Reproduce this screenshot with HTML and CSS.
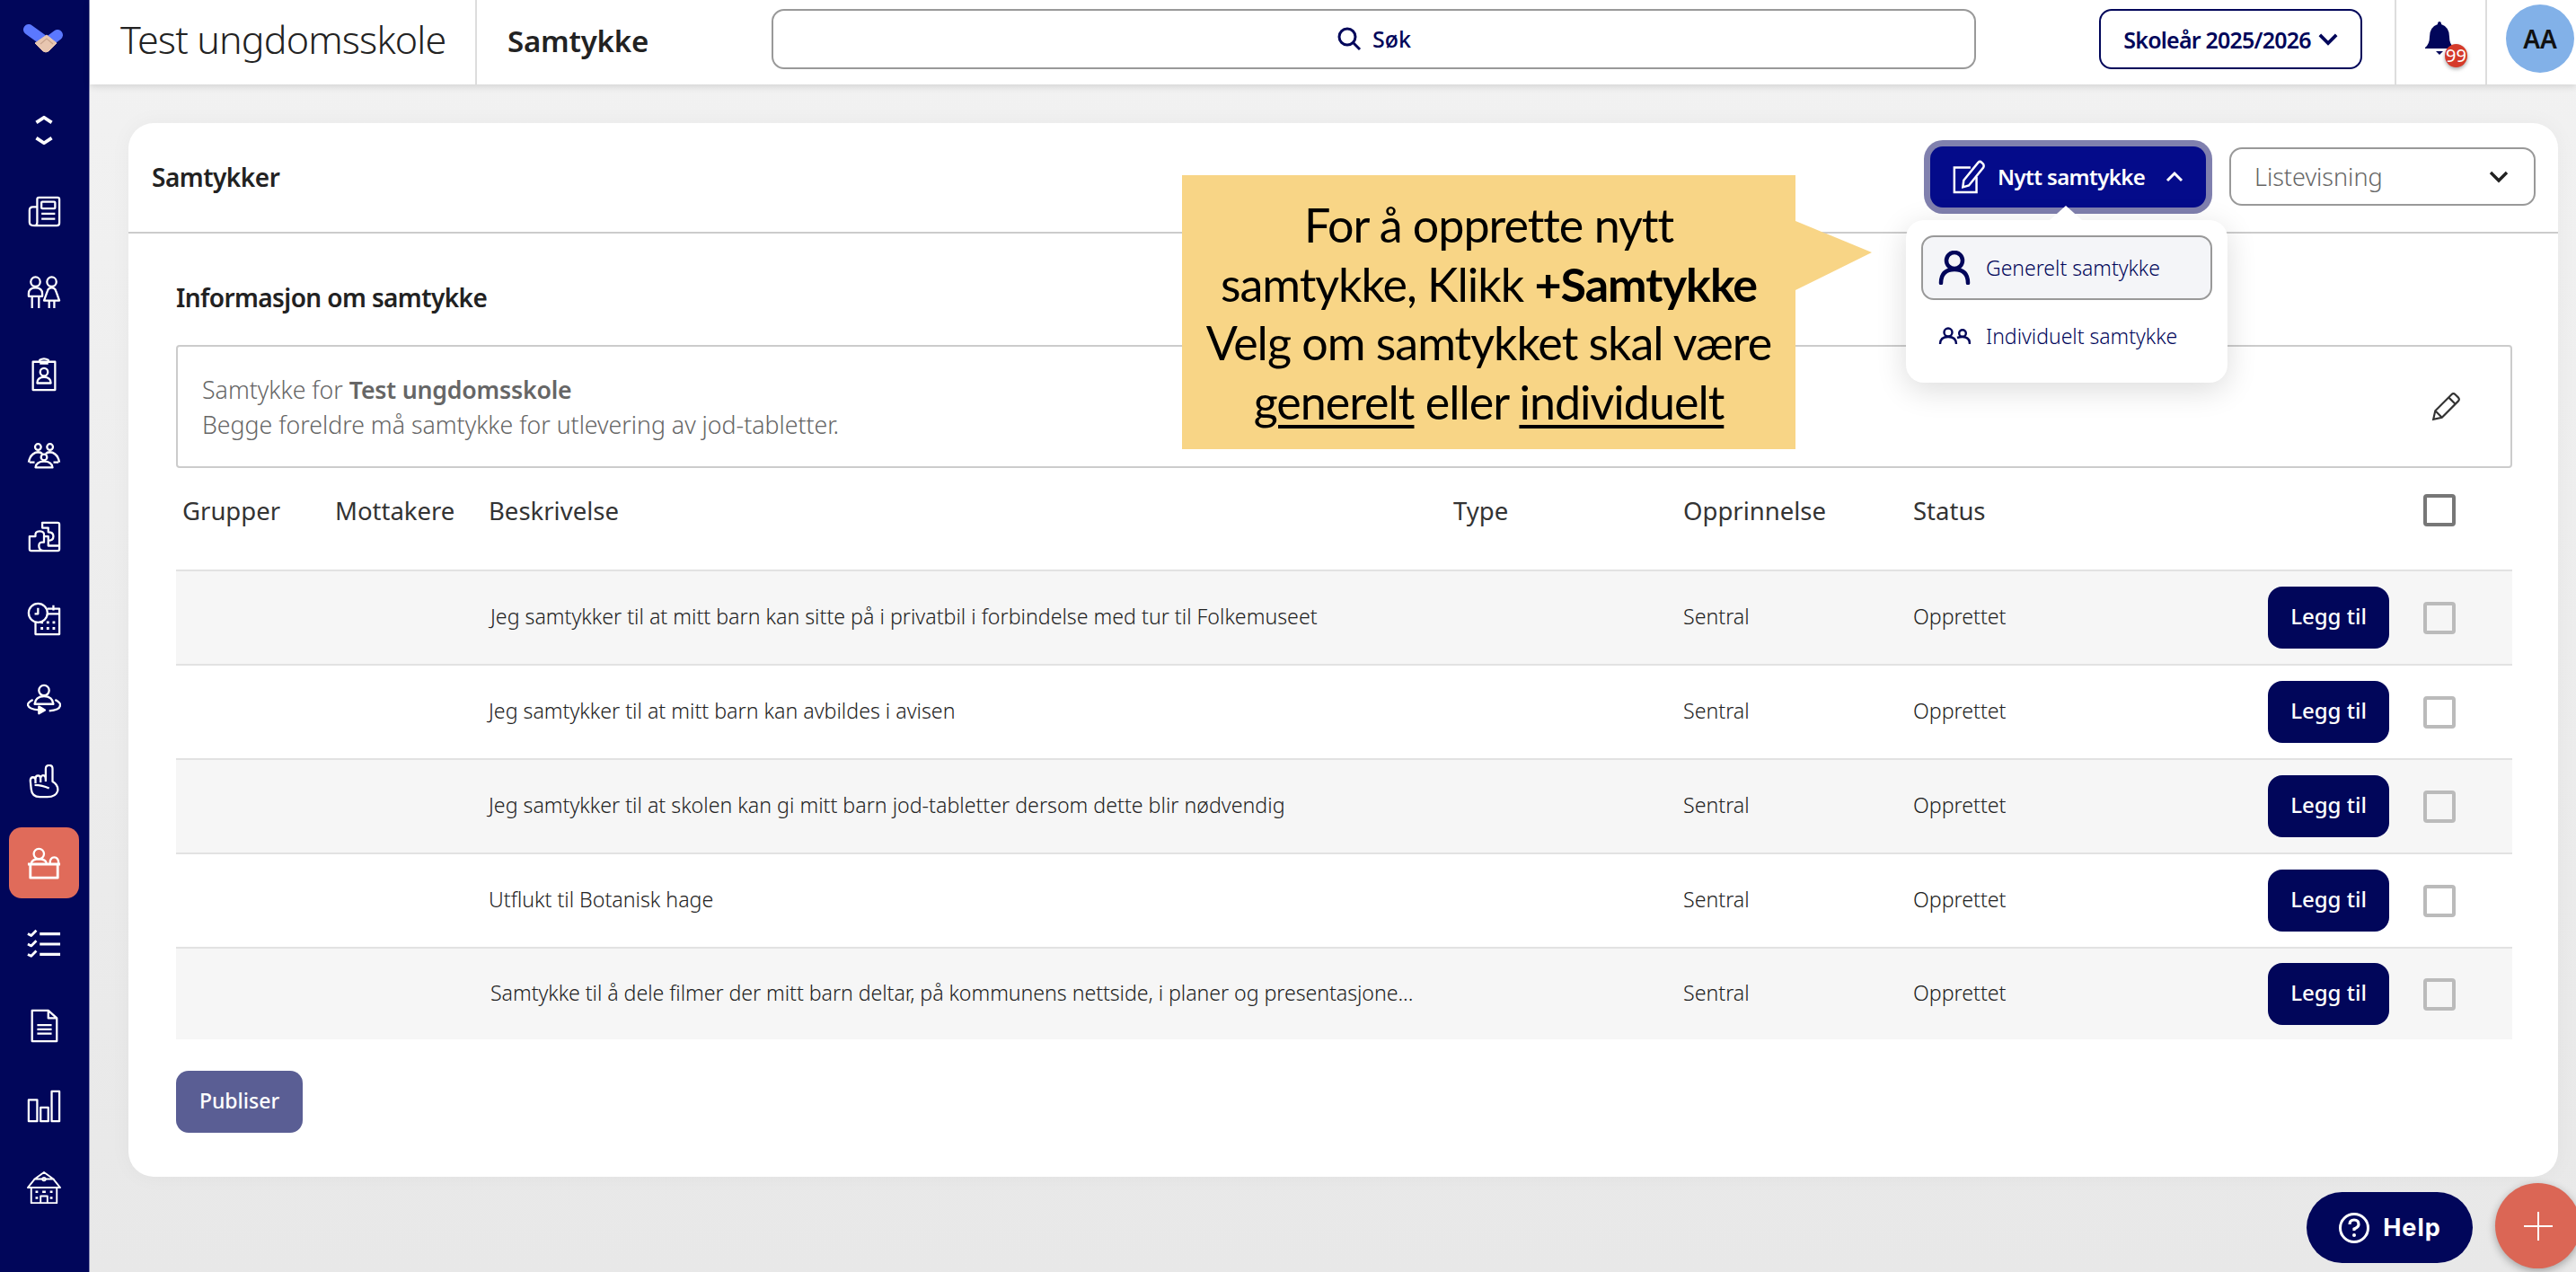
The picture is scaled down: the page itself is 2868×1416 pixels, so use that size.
FILE: index.html
```html
<!DOCTYPE html>
<html lang="nb">
<head>
  <meta charset="UTF-8">
  <meta name="viewport" content="width=device-width">
  <title>Samtykke</title>
  <link rel="stylesheet" href="styles.css">
</head>
<body>
  <div class="app">
    <nav class="sidebar">
      <div class="logo">
        <svg width="46" height="34" viewBox="0 0 46 34">
          <path d="M6 6 L24 19" stroke="#5b78ff" stroke-width="12" stroke-linecap="round" fill="none"/>
          <path d="M38 12 L30 18" stroke="#5b78ff" stroke-width="12" stroke-linecap="round" fill="none"/>
          <path d="M13 21 L26 12 L37 21 L28 30 Q25 32 22 30 Z" fill="#e8c6b0" stroke="#e8c6b0" stroke-width="1" stroke-linejoin="round"/>
          <path d="M19 22 L26 16 L33 22" stroke="#c9a48e" stroke-width="1.2" fill="none"/>
        </svg>
      </div>
      <a class="nav-item">
        <svg class="nav-icon" viewBox="0 0 40 40"><path d="M11 11 L20 5 L29 11 M11 29 L20 35 L29 29" stroke-width="4"/></svg>
      </a>
      <a class="nav-item">
        <svg class="nav-icon" viewBox="0 0 40 40"><path d="M9 36 H35 Q38 36 38 33 V5 Q38 3 36 3 H14 Q12 3 12 5 V32 Q12 36 9 36 Q3 36 3 32 V18 Q3 14 7 14 H12"/><rect x="17" y="8" width="16" height="8" rx="1"/><path d="M17 22 H33 M17 28 H33"/></svg>
      </a>
      <a class="nav-item">
        <svg class="nav-icon" viewBox="0 0 40 40"><circle cx="10" cy="7" r="5.5"/><path d="M2 21 Q2 14 10 14 Q18 14 18 21 V24 H2 Z M6 24 V38 M14 24 V38"/><circle cx="29" cy="7" r="5.5"/><path d="M29 14 Q25 14 24 18 L20 29 H38 L34 18 Q33 14 29 14 Z M26 29 V38 M32 29 V38"/></svg>
      </a>
      <a class="nav-item">
        <svg class="nav-icon" viewBox="0 0 40 40"><rect x="7" y="5" width="26" height="33"/><path d="M15 5 V3 Q20 0 25 3 V5 M15 7 H25"/><circle cx="20" cy="17" r="4.5"/><path d="M12 30 Q12 23 20 23 Q28 23 28 30 H12 Z"/></svg>
      </a>
      <a class="nav-item">
        <svg class="nav-icon" viewBox="0 0 40 40"><circle cx="13" cy="9" r="3.5"/><circle cx="27" cy="9" r="3.5"/><circle cx="20" cy="21" r="3.5"/><path d="M2 27 Q4 16 13 15 Q16 15 18 17 M38 27 Q36 16 27 15 Q24 15 22 17 M3 27 H9 M31 27 H37 M10 33 Q11 26 20 26 Q29 26 30 33 Z"/></svg>
      </a>
      <a class="nav-item">
        <svg class="nav-icon" viewBox="0 0 40 40"><path d="M18 3 H36 Q38 3 38 5 V34 Q38 36 36 36 H5 Q3 36 3 34 V19 H10 Q9 13 15 13 Q21 13 20 19 H25 V24 Q31 24 31 19 Q31 14 25 14 V9 H18 Z M20 19 V26 Q14 25 14 30 Q14 36 20 36 M25 24 V30 H38"/></svg>
      </a>
      <a class="nav-item">
        <svg class="nav-icon" viewBox="0 0 40 40"><circle cx="13" cy="13" r="11"/><path d="M13 7 V14 H9"/><path d="M24 8 H38 V38 H10 V24"/><path d="M24 14 H38 M31 4 V10" /><path d="M16 24 H19 M23 24 H26 M30 24 H33 M16 31 H19 M23 31 H26 M30 31 H33" stroke-width="3"/></svg>
      </a>
      <a class="nav-item">
        <svg class="nav-icon" viewBox="0 0 40 40"><circle cx="20" cy="9" r="6"/><path d="M9 25 Q10 16 20 16 Q30 16 31 25 Z"/><path d="M7 20 Q1 23 1 26 Q2 31 14 32 M26 33 Q39 32 39 26 Q39 23 33 20"/><path d="M14 28 L21 32 L14 36 Z" fill="#fff"/></svg>
      </a>
      <a class="nav-item">
        <svg class="nav-icon" viewBox="0 0 40 40"><path d="M22 20 V5 Q22 1 26 1 Q30 1 30 5 V20 Q37 24 36 31 Q34 38 24 38 H15 Q6 38 5 29 L4 19 Q4 15 7 15 Q10 15 10 18 V22 M10 17 Q10 13 13 13 Q16 13 16 17 V21 M16 16 Q17 12 20 13 Q22 14 22 18 M9 24 Q18 24 26 28"/></svg>
      </a>
      <a class="nav-item nav-item-active">
        <svg class="nav-icon" viewBox="0 0 40 40"><circle cx="14" cy="9" r="6"/><path d="M5 20 Q6 15 14 15 Q22 15 23 20 M27 20 Q27 13 32 13 Q37 13 37 20"/><path d="M1 21 H39 M4 21 V37 H36 V21" stroke-width="3"/></svg>
      </a>
      <a class="nav-item">
        <svg class="nav-icon" viewBox="0 0 40 40"><path d="M15 8 H39 M15 20 H39 M15 32 H39" stroke-width="3.4"/><path d="M1 8 L5 10 L11 4 M1 20 L5 22 L11 16 M1 32 L5 34 L11 28" stroke-width="3"/></svg>
      </a>
      <a class="nav-item">
        <svg class="nav-icon" viewBox="0 0 40 40"><path d="M6 2 H25 L35 11 V38 H6 Z M25 2 V11 H35"/><path d="M12 19 H29 M12 24 H29 M12 29 H29"/></svg>
      </a>
      <a class="nav-item">
        <svg class="nav-icon" viewBox="0 0 40 40"><rect x="2" y="12" width="10" height="25"/><rect x="16" y="21" width="9" height="16"/><rect x="29" y="2" width="9" height="35"/></svg>
      </a>
      <a class="nav-item">
        <svg class="nav-icon" viewBox="0 0 40 40"><path d="M20 1 L31 9 H9 Z" stroke-width="2"/><circle cx="20" cy="9" r="2" stroke-width="1.6"/><path d="M9 9 L1 19 H39 L31 9 M5 19 V37 H35 V19 M16 37 V29 H24 V37" stroke-width="2"/><path d="M10 24 H13 M27 24 H30 M10 31 H13 M27 31 H30 M18 24 H22" stroke-width="2.6"/></svg>
      </a>
    </nav>

    <div class="main">
      <header class="topbar">
        <div class="school-name">Test ungdomsskole</div>
        <div class="page-name">Samtykke</div>
        <div class="search">
          <svg class="search-icon" viewBox="0 0 28 28"><circle cx="12" cy="12" r="9"/><path d="M19 19 L26 26"/></svg>
          <span>Søk</span>
        </div>
        <button class="year-btn">Skoleår 2025/2026
          <svg class="year-chevron" viewBox="0 0 24 16"><path d="M2 3 L12 13 L22 3"/></svg>
        </button>
        <div class="bell-wrap">
          <svg class="bell" viewBox="0 0 32 38"><path d="M16 0 Q18 0 18 3 Q27 6 27 17 Q27 25 32 29 V30 H0 V29 Q5 25 5 17 Q5 6 14 3 Q14 0 16 0 Z M12 33 H20 L16 37 Z"/></svg>
          <span class="bell-count">99</span>
        </div>
        <div class="avatar-wrap"><div class="avatar">AA</div></div>
      </header>

      <section class="content">
        <div class="card">
          <div class="card-head">
            <h2 class="card-title">Samtykker</h2>
            <div class="card-actions">
              <div class="new-wrap">
                <button class="new-btn">
                  <svg class="new-icon" viewBox="0 0 40 40"><path d="M22 9 H3 V38 H29 V20" stroke-width="2.6"/><path d="M14 24 L31 3 Q33 1 35 3 L37 5 Q38 7 37 9 L20 30 L13 32 Z" stroke-width="2.6"/></svg>
                  <span>Nytt samtykke</span>
                  <svg class="new-chevron" viewBox="0 0 20 14"><path d="M2 11 L10 3 L18 11"/></svg>
                </button>
                <div class="menu">
                  <div class="menu-item menu-item-active">
                    <svg class="menu-icon" viewBox="0 0 36 38"><circle cx="18" cy="11" r="9" stroke-width="4.5"/><path d="M3 36 Q3 21 18 21 Q33 21 33 36" stroke-width="4.5" stroke-linecap="round"/></svg>
                    <span>Generelt samtykke</span>
                  </div>
                  <div class="menu-item">
                    <svg class="menu-icon menu-icon-small" viewBox="0 0 36 20"><circle cx="11" cy="6" r="4.5"/><path d="M2 19 Q2 11 11 11 Q20 11 20 19"/><circle cx="27" cy="7" r="3.8"/><path d="M21 12 Q24 11 27 11 Q35 11 35 19"/></svg>
                    <span>Individuelt samtykke</span>
                  </div>
                </div>
              </div>
              <div class="view-select">
                <span>Listevisning</span>
                <svg class="view-chevron" viewBox="0 0 22 14"><path d="M2 2 L11 11 L20 2"/></svg>
              </div>
            </div>
          </div>

          <div class="card-body">
            <h3 class="info-title">Informasjon om samtykke</h3>
            <div class="info-box">
              <div>
                <div>Samtykke for <b>Test ungdomsskole</b></div>
                <div>Begge foreldre må samtykke for utlevering av jod-tabletter.</div>
              </div>
              <svg class="edit-icon" viewBox="0 0 32 32"><path d="M3 29 L5 20 L22 3 Q24 1 26 3 L29 6 Q31 8 29 10 L12 27 Z M19 6 L26 13 M5 20 L12 27"/></svg>
            </div>

            <div class="table">
              <div class="table-row table-head">
                <div>Grupper</div><div>Mottakere</div><div>Beskrivelse</div><div>Type</div><div>Opprinnelse</div><div>Status</div>
                <div class="cell-actions"><span class="check check-head"></span></div>
              </div>
              <div class="table-row row-item">
                <div></div><div></div><div class="desc desc-indent">Jeg samtykker til at mitt barn kan sitte på i privatbil i forbindelse med tur til Folkemuseet</div><div></div><div>Sentral</div><div>Opprettet</div>
                <div class="cell-actions"><button class="add-btn">Legg til</button><span class="check"></span></div>
              </div>
              <div class="table-row row-item">
                <div></div><div></div><div class="desc">Jeg samtykker til at mitt barn kan avbildes i avisen</div><div></div><div>Sentral</div><div>Opprettet</div>
                <div class="cell-actions"><button class="add-btn">Legg til</button><span class="check"></span></div>
              </div>
              <div class="table-row row-item">
                <div></div><div></div><div class="desc">Jeg samtykker til at skolen kan gi mitt barn jod-tabletter dersom dette blir nødvendig</div><div></div><div>Sentral</div><div>Opprettet</div>
                <div class="cell-actions"><button class="add-btn">Legg til</button><span class="check"></span></div>
              </div>
              <div class="table-row row-item">
                <div></div><div></div><div class="desc">Utflukt til Botanisk hage</div><div></div><div>Sentral</div><div>Opprettet</div>
                <div class="cell-actions"><button class="add-btn">Legg til</button><span class="check"></span></div>
              </div>
              <div class="table-row row-item">
                <div></div><div></div><div class="desc desc-indent desc-tight">Samtykke til å dele filmer der mitt barn deltar, på kommunens nettside, i planer og presentasjone...</div><div></div><div>Sentral</div><div>Opprettet</div>
                <div class="cell-actions"><button class="add-btn">Legg til</button><span class="check"></span></div>
              </div>
            </div>

            <button class="publish-btn">Publiser</button>
          </div>
        </div>
      </section>
    </div>
  </div>

  <div class="callout">
    <div>For å opprette nytt</div>
    <div>samtykke, Klikk <b>+Samtykke</b></div>
    <div>Velg om samtykket skal være</div>
    <div><u>generelt</u> eller <u>individuelt</u></div>
  </div>

  <button class="help-btn">
    <svg class="help-icon" viewBox="0 0 36 36"><circle cx="18" cy="18" r="15.5"/><path d="M13 14 Q13 9 18 9 Q23 9 23 14 Q23 17 18 19 V21" stroke-width="3.2"/><circle cx="18" cy="26" r="2" fill="#fff" stroke="none"/></svg>
    Help
  </button>
  <button class="plus-btn">
    <svg class="plus-icon" viewBox="0 0 32 32"><path d="M16 0 V32 M0 16 H32"/></svg>
  </button>
</body>
</html>
```

FILE: styles.css
```css
* {
  box-sizing: border-box;
}
html, body {
  margin: 0;
  height: 1416px;
  overflow: hidden;
}
body {
  position: relative;
  font-family: "Noto Sans", sans-serif;
  color: #222;
}
button {
  font-family: inherit;
  border: 0;
  cursor: pointer;
}
h2, h3 {
  margin: 0;
}

.app {
  display: flex;
  height: 1416px;
}

/* sidebar */
.sidebar {
  width: 100px;
  flex: none;
  background: #01065a;
  border-right: 1px solid #8a8cb5;
  display: flex;
  flex-direction: column;
  align-items: center;
}
.logo {
  height: 100px;
  width: 100%;
  display: flex;
  justify-content: center;
  padding-top: 27px;
}
.logo svg {
  margin-right: 2px;
}
.nav-item {
  width: 78px;
  height: 90.6px;
  flex: none;
  display: flex;
  align-items: center;
  justify-content: center;
  margin-right: 2px;
  border-radius: 14px;
}
.nav-item-active {
  background: #e06b5a;
  height: 79px;
  margin: 6px 2px 5.6px 0;
}
.nav-icon {
  width: 38px;
  height: 38px;
  fill: none;
  stroke: #fff;
  stroke-width: 2.4;
  stroke-linejoin: round;
}

.main {
  flex: 1;
  min-width: 0;
  display: flex;
  flex-direction: column;
  background: linear-gradient(#f2f2f2, #e8e8e8);
}

/* top bar */
.topbar {
  height: 94px;
  flex: none;
  background: #fff;
  display: flex;
  align-items: center;
  box-shadow: 0 2px 8px rgba(0, 0, 0, .14);
  position: relative;
}
.school-name {
  width: 431px;
  height: 100%;
  padding-left: 34px;
  font-size: 43px;
  font-weight: 300;
  letter-spacing: -.85px;
  line-height: 88px;
  border-right: 2px solid #ddd;
  flex: none;
}
.page-name {
  width: 328px;
  padding-left: 34px;
  font-size: 33px;
  font-weight: 600;
  letter-spacing: -.2px;
  margin-bottom: 4px;
  flex: none;
}
.search {
  width: 1341px;
  height: 67px;
  margin-bottom: 8px;
  border: 2px solid #999;
  border-radius: 14px;
  display: flex;
  align-items: center;
  justify-content: center;
  gap: 12px;
  font-size: 25px;
  font-weight: 500;
  color: #01065a;
  flex: none;
}
.search-icon {
  width: 28px;
  height: 28px;
  fill: none;
  stroke: #01065a;
  stroke-width: 3;
}
.year-btn {
  width: 293px;
  height: 67px;
  margin-left: 137px;
  margin-bottom: 7px;
  background: #fff;
  border: 2px solid #01065a;
  border-radius: 14px;
  color: #01065a;
  font-size: 25px;
  font-weight: 600;
  letter-spacing: -.8px;
  display: flex;
  align-items: center;
  justify-content: center;
  gap: 8px;
  flex: none;
}
.year-chevron {
  width: 22px;
  height: 15px;
  fill: none;
  stroke: #01065a;
  stroke-width: 4;
}
.bell-wrap {
  margin-left: 36px;
  width: 103px;
  height: 100%;
  border-left: 2px solid #ddd;
  border-right: 2px solid #ddd;
  position: relative;
  flex: none;
}
.bell {
  position: absolute;
  left: 32px;
  top: 24px;
  width: 32px;
  height: 38px;
  fill: #01065a;
}
.bell-count {
  position: absolute;
  left: 54px;
  top: 49px;
  width: 25px;
  height: 26px;
  border-radius: 50%;
  background: #d53a2a;
  color: #fff;
  font-size: 20px;
  line-height: 26px;
  text-align: center;
  box-shadow: 0 2px 4px rgba(0, 0, 0, .35);
}
.avatar-wrap {
  flex: 1;
  padding-left: 21px;
}
.avatar {
  width: 76px;
  height: 76px;
  margin-bottom: 8px;
  border-radius: 50%;
  background: #82b1e8;
  color: #111;
  font-size: 28px;
  font-weight: 600;
  display: flex;
  align-items: center;
  justify-content: center;
}

/* card */
.content {
  flex: 1;
  padding: 43px 20px 0 43px;
}
.card {
  height: 1173px;
  background: #fff;
  border-radius: 28px;
  box-shadow: 0 0 24px rgba(0, 0, 0, .04);
}
.card-head {
  height: 123px;
  padding: 0 25px 2px 26px;
  border-bottom: 2px solid #ccc;
  display: flex;
  align-items: center;
  justify-content: space-between;
}
.card-title {
  font-size: 28px;
  font-weight: 600;
  letter-spacing: -.5px;
}
.card-actions {
  display: flex;
  align-items: center;
  gap: 26px;
}
.new-wrap {
  position: relative;
}
.new-btn {
  width: 307px;
  height: 68px;
  background: #040b8a;
  color: #fff;
  border-radius: 14px;
  box-shadow: 0 0 0 7px #8080ae;
  display: flex;
  align-items: center;
  padding-left: 24px;
  font-size: 24px;
  font-weight: 600;
  letter-spacing: -.6px;
}
.new-icon {
  width: 38px;
  height: 38px;
  fill: none;
  stroke: #fff;
  margin-right: 13px;
}
.new-chevron {
  width: 20px;
  height: 14px;
  margin-left: 23px;
  fill: none;
  stroke: #fff;
  stroke-width: 3;
}
.menu {
  position: absolute;
  left: -27px;
  top: 82px;
  width: 358px;
  height: 181px;
  background: #fff;
  border-radius: 20px;
  padding: 17px;
  box-shadow: 0 8px 34px rgba(0, 0, 0, .14);
  z-index: 2;
}
.menu::before {
  content: "";
  position: absolute;
  left: 160px;
  top: -16px;
  border: 18px solid transparent;
  border-top: 0;
  border-bottom: 16px solid #fff;
}
.menu-item {
  height: 72px;
  display: flex;
  align-items: center;
  padding-left: 17px;
  border: 2px solid transparent;
  border-radius: 14px;
  color: #01065a;
  font-size: 23px;
  font-weight: 300;
  margin-bottom: 4px;
}
.menu-item-active {
  background: #f4f5f8;
  border-color: #999;
}
.menu-icon {
  width: 36px;
  height: 38px;
  fill: none;
  stroke: #01065a;
  stroke-width: 2.4;
  margin-right: 17px;
}
.menu-icon-small {
  height: 20px;
}
.view-select {
  width: 341px;
  height: 65px;
  border: 2px solid #999;
  border-radius: 14px;
  padding: 0 26px;
  display: flex;
  align-items: center;
  justify-content: space-between;
  font-size: 27px;
  font-weight: 300;
  color: #666;
}
.view-chevron {
  width: 22px;
  height: 14px;
  margin-right: 2px;
  fill: none;
  stroke: #222;
  stroke-width: 3.4;
}
.card-body {
  padding: 0 51px 0 53px;
}
.info-title {
  height: 124px;
  padding-top: 52px;
  font-size: 28px;
  font-weight: 600;
  letter-spacing: -.6px;
  line-height: 38px;
}
.info-box {
  height: 137px;
  border: 2px solid #ccc;
  border-radius: 4px;
  padding: 0 55px 0 27px;
  display: flex;
  align-items: center;
  justify-content: space-between;
  color: #666;
  font-size: 26.7px;
  font-weight: 300;
  line-height: 39px;
}
.info-box b {
  font-weight: 600;
  letter-spacing: -.2px;
}
.edit-icon {
  width: 34px;
  height: 34px;
  fill: none;
  stroke: #333;
  stroke-width: 2;
}

/* table */
.table-row {
  display: grid;
  grid-template-columns: 170px 171px 1074px 256px 256px 255px 1fr;
  align-items: center;
}
.table-row > div {
  padding-left: 7px;
}
.table-head {
  height: 94px;
  margin-bottom: 19px;
  font-size: 27.5px;
  color: #333;
}
.row-item {
  height: 105px;
  border-top: 2px solid #e2e2e2;
  font-size: 23.2px;
  font-weight: 300;
  color: #222;
}
.row-item > div {
  padding-bottom: 3px;
}
.row-item:nth-child(even) {
  background: #f6f6f6;
}
.row-item:last-child {
  height: 103px;
}
.cell-actions {
  grid-column: 7;
  display: flex;
  justify-content: flex-end;
  align-items: center;
  gap: 38px;
  padding-right: 63px;
  white-space: nowrap;
}
.table-row > .cell-actions {
  padding-left: 0;
  padding-bottom: 0;
}
.desc {
  white-space: nowrap;
}
.table-row > .desc-indent {
  padding-left: 9px;
}
.desc-tight {
  letter-spacing: -.06px;
}
.check {
  width: 36px;
  height: 36px;
  flex: none;
  border: 4px solid #bbb;
  border-radius: 4px;
  background: transparent;
}
.check-head {
  border-color: #777;
}
.add-btn {
  width: 135px;
  height: 69px;
  padding-bottom: 5px;
  background: #01065a;
  color: #fff;
  border-radius: 16px;
  font-size: 24px;
  font-weight: 500;
}
.publish-btn {
  display: block;
  width: 141px;
  height: 69px;
  margin-top: 35px;
  padding-bottom: 4px;
  background: #5a5e94;
  color: #fff;
  border-radius: 14px;
  font-size: 23px;
  font-weight: 500;
}

/* overlays */
.callout {
  position: absolute;
  left: 1316px;
  top: 195px;
  width: 683px;
  height: 305px;
  background: #f8d586;
  padding-top: 23px;
  font-family: Lato, sans-serif;
  font-size: 52px;
  letter-spacing: -1px;
  line-height: 65.5px;
  color: #000;
  text-align: center;
  white-space: nowrap;
}
.callout u {
  text-decoration-thickness: 4px;
  text-underline-offset: 6px;
}
.callout::after {
  content: "";
  position: absolute;
  left: 100%;
  top: 51px;
  border-left: 85px solid #f8d586;
  border-top: 35px solid transparent;
  border-bottom: 42px solid transparent;
}
.help-btn {
  position: absolute;
  left: 2568px;
  top: 1327px;
  width: 185px;
  height: 79px;
  border-radius: 40px;
  background: #01065a;
  color: #fff;
  font-family: Inter, sans-serif;
  font-size: 27px;
  font-weight: 700;
  letter-spacing: 1px;
  display: flex;
  align-items: center;
  justify-content: center;
  gap: 14px;
}
.help-icon {
  width: 36px;
  height: 36px;
  fill: none;
  stroke: #fff;
  stroke-width: 3;
}
.plus-btn {
  position: absolute;
  left: 2778px;
  top: 1317px;
  width: 95px;
  height: 95px;
  padding: 0;
  border-radius: 50%;
  background: #db6655;
  box-shadow: 0 3px 10px rgba(0, 0, 0, .3);
  display: flex;
  align-items: center;
  justify-content: center;
}
.plus-icon {
  width: 32px;
  height: 32px;
  fill: none;
  stroke: #fff;
  stroke-width: 2;
}
```
